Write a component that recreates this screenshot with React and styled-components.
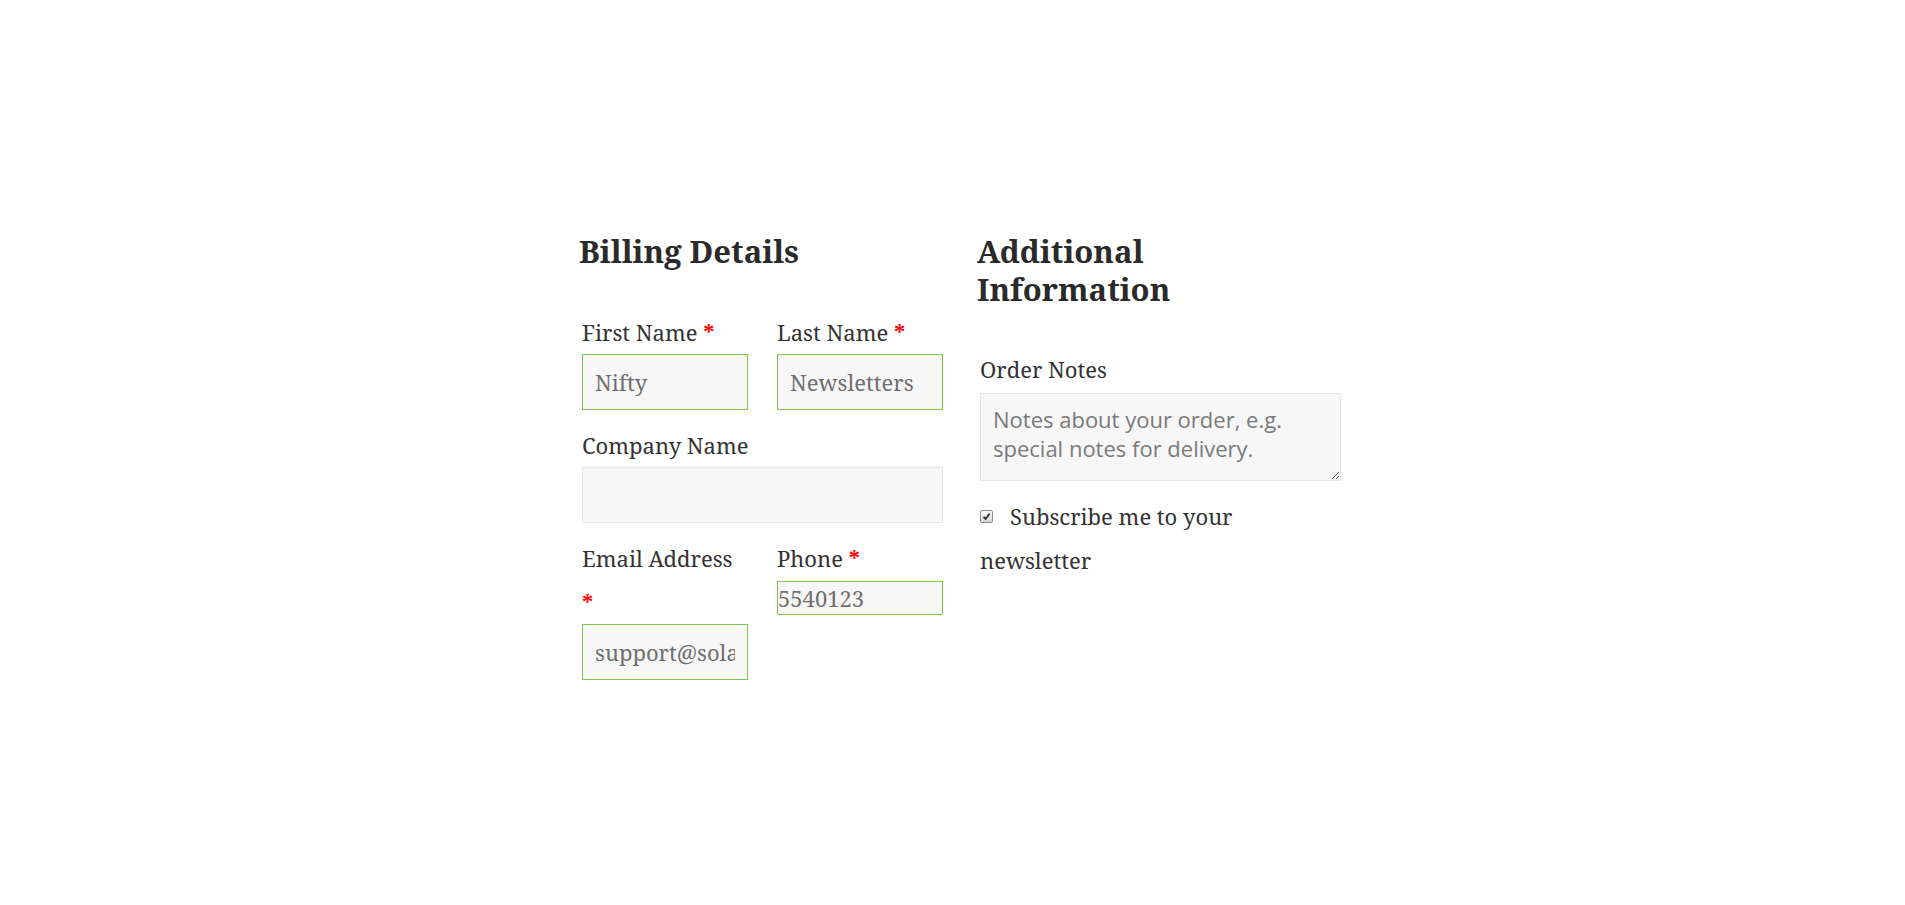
import React from 'react';
import styled, { createGlobalStyle } from 'styled-components';

const GlobalStyle = createGlobalStyle`
  html, body {
    margin: 0;
    padding: 0;
    background: #ffffff;
  }
  body {
    font-family: "Noto Serif", "DejaVu Serif", serif;
    color: #333333;
  }
`;

const Page = styled.div`
  width: 1905px;
  min-height: 905px;
  padding-top: 233px;
  box-sizing: border-box;
`;

const Checkout = styled.form`
  width: 783px;
  margin: 0 auto;
  padding-left: 18px;
  box-sizing: border-box;
  display: grid;
  grid-template-columns: 367px 367px;
  column-gap: 31px;
  align-items: start;
`;

const Column = styled.section`
  display: flex;
  flex-direction: column;
`;

const Heading = styled.h3`
  margin: 0 0 39px;
  max-width: ${(p) => (p.$narrow ? '330px' : 'none')};
  font-size: 31px;
  line-height: 37.5px;
  font-weight: 700;
  color: #2a2a2a;
`;

const FieldGrid = styled.div`
  padding: 0 3px;
  display: grid;
  grid-template-columns: 166px 166px;
  column-gap: 29px;
  row-gap: 13px;
  align-items: start;
`;

const Field = styled.p`
  margin: 0;
  grid-column: ${(p) => (p.$wide ? '1 / -1' : 'auto')};
`;

const Label = styled.label`
  display: block;
  font-size: 22px;
  line-height: 44px;
  color: #333333;
`;

const Required = styled.abbr`
  color: #ff0000;
  font-weight: 700;
  text-decoration: none;
  border: 0;
`;

const Input = styled.input`
  display: block;
  width: 100%;
  height: ${(p) => (p.$compact ? '34px' : '56px')};
  margin: ${(p) => (p.$compact ? '1px 0 0' : '0')};
  padding: ${(p) => (p.$compact ? '0' : '0 12px')};
  box-sizing: border-box;
  background: #f7f7f7;
  border: 1px solid ${(p) => (p.$valid ? '#80c550' : '#e6e6e6')};
  border-radius: 0;
  font-family: "Noto Serif", "DejaVu Serif", serif;
  font-size: 22px;
  color: #6f6f6f;
  outline: none;
`;

const TextArea = styled.textarea`
  display: block;
  width: 100%;
  height: 88px;
  margin-top: 2px;
  padding: 11px 12px;
  box-sizing: border-box;
  background: #f7f7f7;
  border: 1px solid #e6e6e6;
  border-radius: 0;
  font-family: "Open Sans", "Noto Sans", sans-serif;
  font-size: 22px;
  line-height: 29px;
  color: #777777;
  resize: vertical;
  outline: none;

  &::placeholder {
    color: #7a7a7a;
    opacity: 1;
  }
`;

const CheckRow = styled.p`
  margin: 13px 0 0;
  padding: 0 3px;
`;

const CheckLabel = styled.label`
  display: block;
  width: 280px;
  font-size: 22px;
  line-height: 44px;
  color: #333333;
`;

const Box = styled.span`
  display: inline-block;
  width: 13px;
  height: 13px;
  margin: 0 17px 2px 0;
  box-sizing: border-box;
  border: 1px solid #8d8d8d;
  border-radius: 2px;
  background: linear-gradient(#fbfbfb, #d6d6d6);
  position: relative;

  svg {
    position: absolute;
    left: 1px;
    top: 1px;
  }
`;

const Nowrap = styled.span`
  white-space: nowrap;
`;

const Star = () => (
  <Required title="required">*</Required>
);

export default function App() {
  return (
    <Page>
      <GlobalStyle />
      <Checkout onSubmit={(e) => e.preventDefault()}>
        <Column>
          <Heading>Billing Details</Heading>
          <FieldGrid>
            <Field>
              <Label htmlFor="first">First Name <Star /></Label>
              <Input id="first" $valid value="Nifty" readOnly />
            </Field>
            <Field>
              <Label htmlFor="last">Last Name <Star /></Label>
              <Input id="last" $valid value="Newsletters" readOnly />
            </Field>
            <Field $wide>
              <Label htmlFor="company">Company Name</Label>
              <Input id="company" value="" readOnly />
            </Field>
            <Field>
              <Label htmlFor="email"><Nowrap>Email Address</Nowrap> <Star /></Label>
              <Input id="email" $valid value="support@solarwinds.com" readOnly />
            </Field>
            <Field>
              <Label htmlFor="phone">Phone <Star /></Label>
              <Input id="phone" $valid $compact value="5540123" readOnly />
            </Field>
          </FieldGrid>
        </Column>
        <Column>
          <Heading $narrow>Additional Information</Heading>
          <FieldGrid>
            <Field $wide>
              <Label htmlFor="notes">Order Notes</Label>
              <TextArea
                id="notes"
                placeholder="Notes about your order, e.g. special notes for delivery."
              />
            </Field>
          </FieldGrid>
          <CheckRow>
            <CheckLabel>
              <Box>
                <svg width="9" height="9" viewBox="0 0 9 9">
                  <path d="M1.5 4.8 L3.6 6.9 L7.6 1.8" fill="none" stroke="#2b2b2b" strokeWidth="1.8" />
                </svg>
              </Box>
              Subscribe me to your newsletter
            </CheckLabel>
          </CheckRow>
        </Column>
      </Checkout>
    </Page>
  );
}
